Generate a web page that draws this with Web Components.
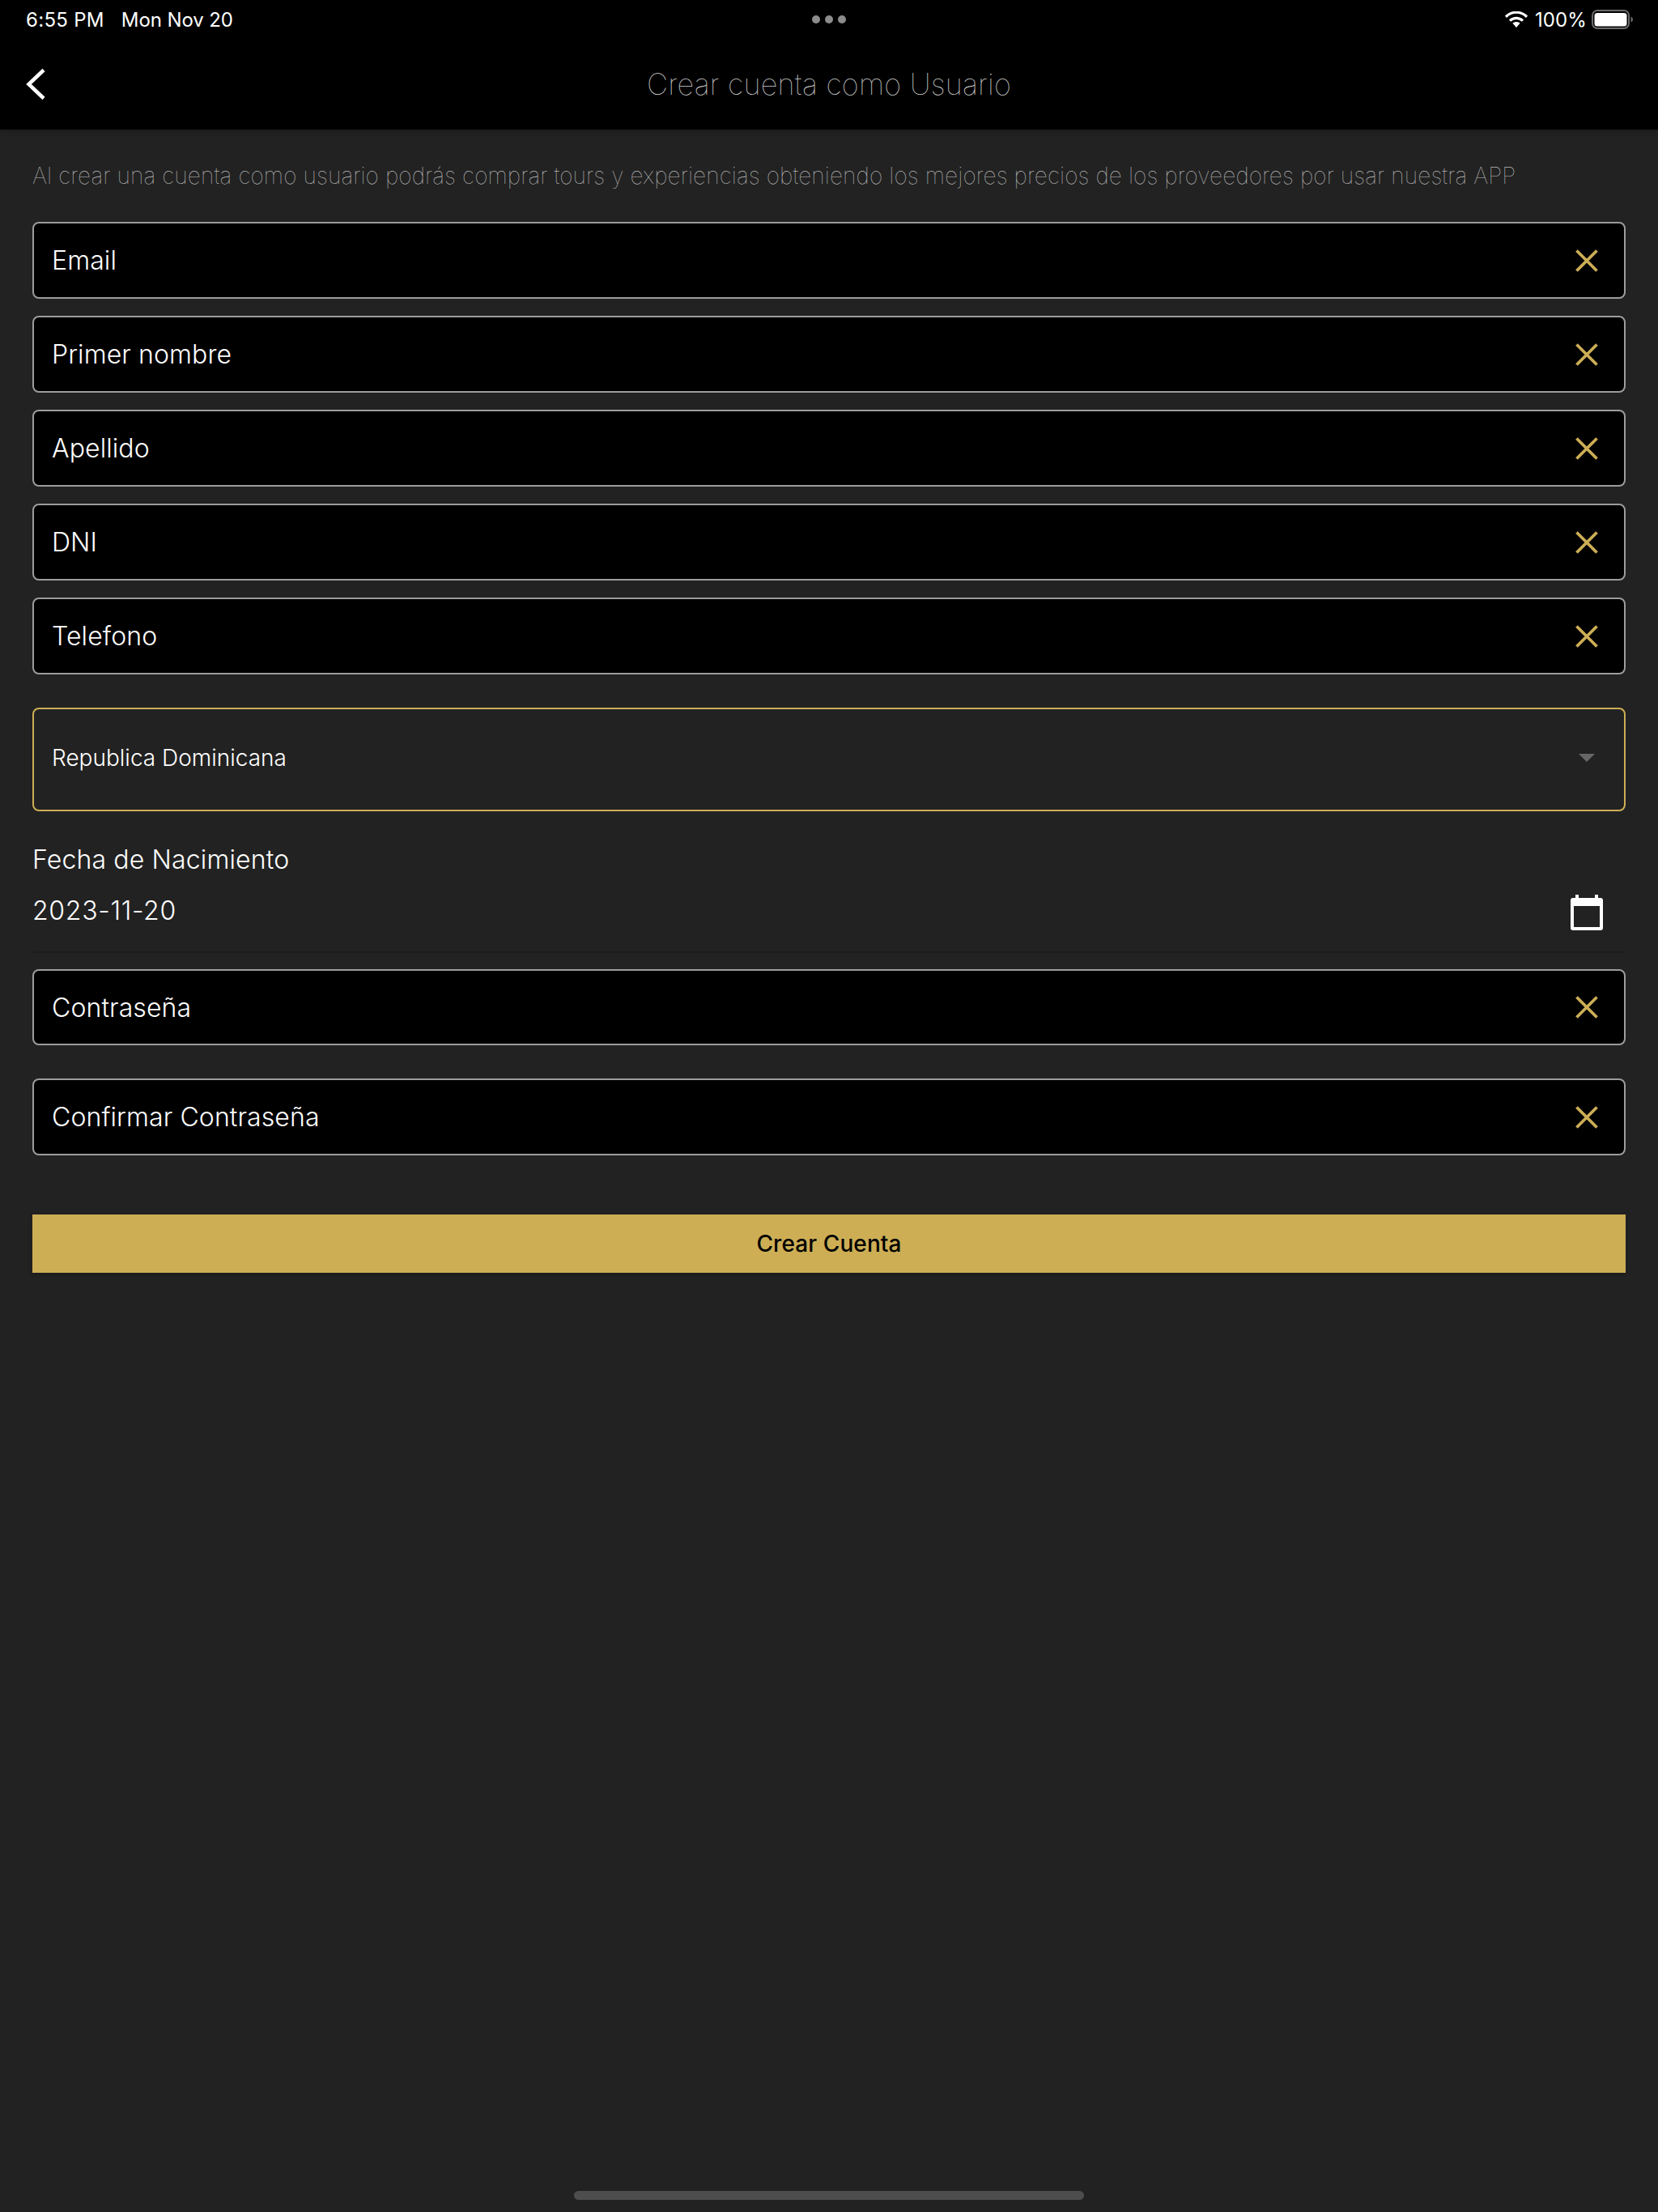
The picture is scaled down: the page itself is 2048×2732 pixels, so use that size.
<!DOCTYPE html>
<html lang="es">
<head>
<meta charset="utf-8">
<title>Crear cuenta</title>
<style>
  html, body { margin: 0; background: #222222; }
  body { font-family: "Inter", "Liberation Sans", sans-serif; color: #fff; }
  signup-page { height: 2732px; }
</style>
</head>
<body>
<signup-page>
  <app-header slot="header">Crear cuenta como Usuario</app-header>
  <p-intro>Al crear una cuenta como usuario podrás comprar tours y experiencias obteniendo los mejores precios de los proveedores por usar nuestra APP</p-intro>
  <form-stack>
    <text-field>Email</text-field>
    <text-field>Primer nombre</text-field>
    <text-field>Apellido</text-field>
    <text-field>DNI</text-field>
    <text-field>Telefono</text-field>
    <select-field>Republica Dominicana</select-field>
    <date-field label="Fecha de Nacimiento" value="2023-11-20"></date-field>
    <text-field style="height:94px">Contraseña</text-field>
    <text-field style="margin-top:20px">Confirmar Contraseña</text-field>
    <gold-button>Crear Cuenta</gold-button>
  </form-stack>
</signup-page>

<script>
class SignupPage extends HTMLElement {
  constructor() {
    super();
    this.attachShadow({ mode: 'open' }).innerHTML = /*html*/`
    <style>
      :host { display: flex; flex-direction: column; background: #222222; overflow: hidden; }
      .bar { margin-top: auto; height: 26px; display: flex; justify-content: center; flex: none; }
      .bar span { width: 630px; height: 11px; border-radius: 6px; background: #4d4d4d; }
    </style>
    <slot name="header"></slot>
    <slot></slot>
    <div class="bar"><span></span></div>
    `;
  }
}

class AppHeader extends HTMLElement {
  constructor() {
    super();
    this.attachShadow({ mode: 'open' }).innerHTML = /*html*/`
    <style>
      :host { display: block; flex: none; height: 160px; background: #000; box-shadow: 0 2px 6px rgba(0,0,0,.25); position: relative; }
      .status { height: 48px; display: flex; align-items: center; padding: 0 30px 0 32px; font-size: 24px; color: #fff; position: relative; }
      .time { letter-spacing: .3px; }
      .date { margin-left: 21px; letter-spacing: -.1px; }
      .dots { position: absolute; left: 1003px; top: 19px; display: flex; gap: 6px; }
      .dots i { width: 10px; height: 10px; border-radius: 50%; background: #8c8c8c; }
      .right { margin-left: auto; display: flex; align-items: center; }
      .pct { margin: 0 6px 0 9px; letter-spacing: .1px; }
      .nav { height: 112px; display: flex; align-items: center; position: relative; }
      .back { position: absolute; left: 30px; top: 35px; }
      h1 { margin: 0; width: 100%; text-align: center; font-size: 36px; font-weight: 100; letter-spacing: .2px; color: #d0d0d0; }
    </style>
    <div class="status">
      <span class="time">6:55 PM</span><span class="date">Mon Nov 20</span>
      <div class="dots"><i></i><i></i><i></i></div>
      <div class="right">
        <svg width="28" height="20" viewBox="0 0 28 20">
          <path d="M1 6.8C8.5-.6 19.500-.6 27 6.800" fill="none" stroke="#fff" stroke-width="3.200"/>
          <path d="M6 11.600C10.800 7.200 17.200 7.200 22 11.600" fill="none" stroke="#fff" stroke-width="3.200"/>
          <path d="M9.300 14.600C12 12.400 16 12.400 18.700 14.600L14 20Z" fill="#fff"/>
        </svg>
        <span class="pct">100%</span>
        <svg width="52" height="24" viewBox="0 0 52 24">
          <rect x="1" y="1" width="45" height="22" rx="6" fill="none" stroke="#6b6b6b" stroke-width="2"/>
          <rect x="3.500" y="4" width="40" height="16.500" rx="3.500" fill="#fff"/>
          <path d="M48.500 8.500c1.500.5 2.500 2 2.500 3.500s-1 3-2.500 3.500z" fill="#6b6b6b"/>
        </svg>
      </div>
    </div>
    <div class="nav">
      <svg class="back" width="28" height="42" viewBox="0 0 28 42">
        <path d="M24 3.500 5.500 21 24 38.500" fill="none" stroke="#fff" stroke-width="4.500"/>
      </svg>
      <h1><slot></slot></h1>
    </div>
    `;
  }
}

class PIntro extends HTMLElement {
  constructor() {
    super();
    this.attachShadow({ mode: 'open' }).innerHTML = /*html*/`
    <style>
      :host { display: block; flex: none; padding: 39px 40px 0; height: 75px; font-size: 28px; line-height: 36px; font-weight: 100; letter-spacing: .12px; color: #b8b8b8; white-space: nowrap; }
    </style>
    <slot></slot>
    `;
  }
}

class FormStack extends HTMLElement {
  constructor() {
    super();
    this.attachShadow({ mode: 'open' }).innerHTML = /*html*/`
    <style>
      :host { display: flex; flex-direction: column; gap: 21px; padding: 0 40px; flex: none; }
    </style>
    <slot></slot>
    `;
  }
}

const closeIcon = /*html*/`
  <svg width="28" height="28" viewBox="0 0 28 28">
    <path d="M1.500 1.500 26.500 26.500M26.500 1.500 1.500 26.500" fill="none" stroke="#cdae55" stroke-width="3.800"/>
  </svg>`;

class TextField extends HTMLElement {
  constructor() {
    super();
    this.attachShadow({ mode: 'open' }).innerHTML = /*html*/`
    <style>
      :host { display: flex; align-items: center; justify-content: space-between; box-sizing: border-box; height: 95px; padding: 0 32px 0 22px; background: #000; border: 2px solid #9c9c9c; border-radius: 8px; font-size: 32px; font-weight: 340; color: #fff; letter-spacing: .1px; }
      svg { display: block; }
    </style>
    <span><slot></slot></span>
    ${closeIcon}
    `;
  }
}

class SelectField extends HTMLElement {
  constructor() {
    super();
    this.attachShadow({ mode: 'open' }).innerHTML = /*html*/`
    <style>
      :host { display: flex; align-items: center; justify-content: space-between; box-sizing: border-box; height: 128px; margin-top: 20px; padding: 0 36px 5px 22px; border: 2px solid #cdae55; border-radius: 8px; font-size: 28px; font-weight: 340; color: #fff; }
    </style>
    <span><slot></slot></span>
    <svg width="20" height="10" viewBox="0 0 20 10"><path d="M0 0H20L10 10Z" fill="#666"/></svg>
    `;
  }
}

class DateField extends HTMLElement {
  constructor() {
    super();
    const label = this.getAttribute('label');
    const value = this.getAttribute('value');
    this.attachShadow({ mode: 'open' }).innerHTML = /*html*/`
    <style>
      :host { display: block; box-sizing: border-box; height: 154px; margin-bottom: -1px; border-bottom: 2px solid #1c1c1c; font-size: 32px; font-weight: 340; color: #fff; }
      .label { padding-top: 19px; line-height: 40px; letter-spacing: .15px; }
      .row { display: flex; justify-content: space-between; align-items: flex-start; padding-right: 28px; }
      .value { margin-top: 23px; line-height: 40px; letter-spacing: .7px; }
      svg { display: block; margin-top: 23px; }
    </style>
    <div class="label">${label}</div>
    <div class="row">
      <span class="value">${value}</span>
      <svg width="40" height="44" viewBox="0 0 40 44">
        <path d="M6 0h4v4H6zM30 0h4v4h-4z" fill="#fff"/>
        <path fill-rule="evenodd" d="M3 4H37a3 3 0 0 1 3 3V41a3 3 0 0 1-3 3H3a3 3 0 0 1-3-3V7a3 3 0 0 1 3-3ZM4 14V40H36V14Z" fill="#fff"/>
      </svg>
    </div>
    `;
  }
}

class GoldButton extends HTMLElement {
  constructor() {
    super();
    this.attachShadow({ mode: 'open' }).innerHTML = /*html*/`
    <style>
      :host { display: flex; align-items: center; justify-content: center; height: 72px; margin-top: 52px; background: #cdae55; color: #000; font-size: 28px; font-weight: 450; letter-spacing: .1px; box-shadow: 0 3px 6px rgba(0,0,0,.2); }
    </style>
    <slot></slot>
    `;
  }
}

customElements.define('signup-page', SignupPage);
customElements.define('app-header', AppHeader);
customElements.define('p-intro', PIntro);
customElements.define('form-stack', FormStack);
customElements.define('text-field', TextField);
customElements.define('select-field', SelectField);
customElements.define('date-field', DateField);
customElements.define('gold-button', GoldButton);
</script>
</body>
</html>
